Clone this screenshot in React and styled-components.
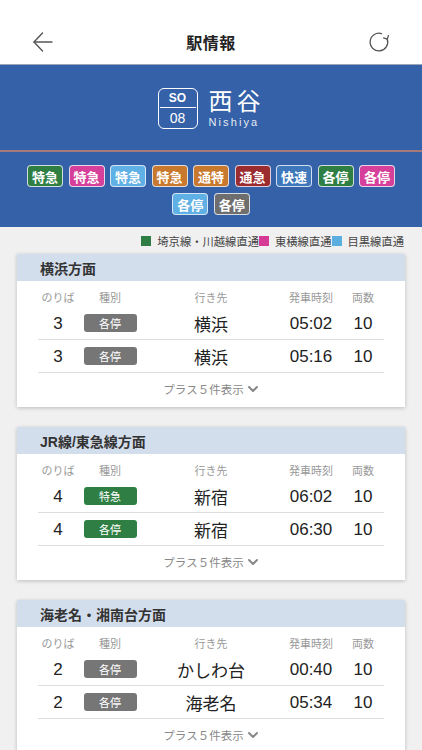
import React from "react";
import styled, { createGlobalStyle } from "styled-components";

const FONT = `"Liberation Sans", "Noto Sans CJK JP", sans-serif`;

const GlobalStyle = createGlobalStyle`
  html, body {
    margin: 0;
    padding: 0;
    background: #f0f0f0;
    font-family: ${FONT};
    -webkit-font-smoothing: antialiased;
  }
  body {
    width: 422px;
    height: 750px;
    overflow: hidden;
  }
`;

const TRAIN_TYPES = [
  { label: "特急", color: "#2f7f45" },
  { label: "特急", color: "#d6409a" },
  { label: "特急", color: "#5fb0e4" },
  { label: "特急", color: "#c8792d" },
  { label: "通特", color: "#c8792d" },
  { label: "通急", color: "#9a2b2e" },
  { label: "快速", color: "#3e78bb" },
  { label: "各停", color: "#2f7f45" },
  { label: "各停", color: "#d6409a" },
  { label: "各停", color: "#5fb0e4" },
  { label: "各停", color: "#6e6e6e" }
];

const LEGEND = [
  { label: "埼京線・川越線直通", color: "#2e7d44" },
  { label: "東横線直通", color: "#d63a96" },
  { label: "目黒線直通", color: "#5aaee0" }
];

const DIRECTIONS = [
  {
    title: "横浜方面",
    rows: [
      { track: "3", type: "各停", color: "#767676", dest: "横浜", time: "05:02", cars: "10" },
      { track: "3", type: "各停", color: "#767676", dest: "横浜", time: "05:16", cars: "10" }
    ]
  },
  {
    title: "JR線/東急線方面",
    rows: [
      { track: "4", type: "特急", color: "#2f7f45", dest: "新宿", time: "06:02", cars: "10" },
      { track: "4", type: "各停", color: "#2f7f45", dest: "新宿", time: "06:30", cars: "10" }
    ]
  },
  {
    title: "海老名・湘南台方面",
    rows: [
      { track: "2", type: "各停", color: "#767676", dest: "かしわ台", time: "00:40", cars: "10" },
      { track: "2", type: "各停", color: "#767676", dest: "海老名", time: "05:34", cars: "10" }
    ]
  }
];

const Page = styled.div`
  width: 422px;
  min-height: 750px;
  background: #f0f0f0;
`;

const NavBar = styled.header`
  height: 65px;
  background: #fff;
  border-bottom: 1px solid #9aa6b8;
  display: flex;
  align-items: center;
  justify-content: space-between;
  padding: 0 25px 0 25px;
  box-sizing: border-box;
`;

const NavButton = styled.button`
  width: 36px;
  height: 36px;
  border: 0;
  background: none;
  padding: 0;
  display: flex;
  align-items: center;
  justify-content: center;
  color: #555;
  margin-top: 20px;
`;

const NavTitle = styled.h1`
  margin: 20px 0 0;
  font-size: 16px;
  font-weight: 700;
  color: #222;
  letter-spacing: 0.5px;
`;

const StationPanel = styled.section`
  background: #3461a7;
`;

const StationHead = styled.div`
  height: 85px;
  display: flex;
  align-items: center;
  justify-content: center;
  gap: 11px;
  border-bottom: 2px solid #a5787a;
`;

const NumberBadge = styled.div`
  width: 40px;
  height: 41px;
  box-sizing: border-box;
  border: 1.5px solid #fff;
  border-radius: 6px;
  display: flex;
  flex-direction: column;
  align-items: center;
  justify-content: center;
  color: #fff;
  margin-top: 2px;
`;

const LineCode = styled.span`
  font-size: 12px;
  font-weight: 700;
  line-height: 14px;
  padding: 0 4px 2px;
  border-bottom: 1px solid #fff;
  width: 28px;
  text-align: center;
`;

const StationNo = styled.span`
  font-size: 14px;
  line-height: 16px;
  padding-top: 2px;
  font-weight: 500;
`;

const NameBlock = styled.div`
  display: flex;
  flex-direction: column;
  color: #fff;
`;

const StationName = styled.span`
  font-size: 24px;
  line-height: 28px;
  letter-spacing: 4px;
  font-family: "Noto Sans CJK JP", sans-serif;
  font-weight: 400;
`;

const StationRoman = styled.span`
  font-size: 11px;
  line-height: 14px;
  letter-spacing: 2.1px;
  margin-top: 1px;
  color: #e6ecf5;
`;

const TagArea = styled.div`
  padding: 13px 24px 12px;
  display: flex;
  flex-wrap: wrap;
  justify-content: center;
  gap: 6px 5.5px;
`;

const TypeTag = styled.span`
  width: 36px;
  height: 22px;
  box-sizing: border-box;
  border: 1.5px solid rgba(235, 240, 248, 0.85);
  border-radius: 4px;
  background: ${(p) => p.$color};
  color: #fff;
  font-size: 13px;
  font-weight: 700;
  display: flex;
  align-items: center;
  justify-content: center;
`;

const Legend = styled.div`
  display: flex;
  justify-content: flex-end;
  align-items: center;
  padding: 6px 18px 0 0;
  height: 21px;
  box-sizing: border-box;
  margin-bottom: 6px;
`;

const LegendItem = styled.span`
  display: flex;
  align-items: center;
  font-size: 11.3px;
  color: #444;
  white-space: nowrap;

  &::before {
    content: "";
    width: 10px;
    height: 10px;
    background: ${(p) => p.$color};
    margin-right: 6px;
  }
`;

const Cards = styled.div`
  display: flex;
  flex-direction: column;
  gap: 20px;
  padding: 0 17px;
`;

const Card = styled.section`
  background: #fff;
  box-shadow: 0 1px 4px rgba(0, 0, 0, 0.22);
`;

const CardHeader = styled.h2`
  margin: 0;
  height: 27px;
  background: #d3deec;
  padding-left: 23px;
  display: flex;
  align-items: center;
  font-size: 14px;
  font-weight: 700;
  color: #333;
`;

const Table = styled.div`
  padding: 6px 21px 0;
`;

const Row = styled.div`
  display: grid;
  grid-template-columns: 40px 64px 138px 62px 42px;
  align-items: center;
  justify-items: center;
  height: ${(p) => (p.$head ? "20px" : "32px")};
  border-bottom: ${(p) => (p.$head ? "0" : "1px solid #ddd")};
`;

const HeadCell = styled.span`
  font-size: 11px;
  color: #999;
`;

const Cell = styled.span`
  font-size: 17px;
  color: #222;
  padding-top: 1px;
`;

const TypeBadge = styled.span`
  width: 53px;
  height: 18px;
  border-radius: 3px;
  background: ${(p) => p.$color};
  color: #fff;
  font-size: 11px;
  display: flex;
  align-items: center;
  justify-content: center;
`;

const MoreButton = styled.button`
  width: 100%;
  height: 34px;
  border: 0;
  background: none;
  display: flex;
  align-items: center;
  justify-content: center;
  gap: 3px;
  font-family: ${FONT};
  font-size: 11.5px;
  color: #888;
  padding: 0 0 2px;
`;

function BackIcon() {
  return (
    <svg width="22" height="22" viewBox="0 0 22 22" fill="none" stroke="#555" strokeWidth="1.4" strokeLinecap="round" strokeLinejoin="round">
      <path d="M20 11H2" />
      <path d="M10.5 2L2 11l8.5 9" />
    </svg>
  );
}

function RefreshIcon() {
  return (
    <svg width="22" height="22" viewBox="0 0 22 22" fill="none" stroke="#555" strokeWidth="1.3" strokeLinecap="round" strokeLinejoin="round">
      <path d="M13.5 2.6A8.8 8.8 0 1 0 19.2 8" />
      <path d="M20.4 4.6l-1.2 3.6-3.6-1.3" />
    </svg>
  );
}

function Chevron() {
  return (
    <svg width="12" height="12" viewBox="0 0 12 12" fill="none" stroke="#888" strokeWidth="2" strokeLinecap="round" strokeLinejoin="round">
      <path d="M2 4l4 4 4-4" />
    </svg>
  );
}

function DirectionCard({ title, rows }) {
  return (
    <Card>
      <CardHeader>{title}</CardHeader>
      <Table>
        <Row $head>
          <HeadCell>のりば</HeadCell>
          <HeadCell>種別</HeadCell>
          <HeadCell>行き先</HeadCell>
          <HeadCell>発車時刻</HeadCell>
          <HeadCell>両数</HeadCell>
        </Row>
        {rows.map((r, i) => (
          <Row key={i}>
            <Cell>{r.track}</Cell>
            <TypeBadge $color={r.color}>{r.type}</TypeBadge>
            <Cell>{r.dest}</Cell>
            <Cell>{r.time}</Cell>
            <Cell>{r.cars}</Cell>
          </Row>
        ))}
      </Table>
      <MoreButton>
        プラス５件表示
        <Chevron />
      </MoreButton>
    </Card>
  );
}

export default function App() {
  return (
    <Page>
      <GlobalStyle />
      <NavBar>
        <NavButton aria-label="戻る">
          <BackIcon />
        </NavButton>
        <NavTitle>駅情報</NavTitle>
        <NavButton aria-label="更新">
          <RefreshIcon />
        </NavButton>
      </NavBar>
      <StationPanel>
        <StationHead>
          <NumberBadge>
            <LineCode>SO</LineCode>
            <StationNo>08</StationNo>
          </NumberBadge>
          <NameBlock>
            <StationName>西谷</StationName>
            <StationRoman>Nishiya</StationRoman>
          </NameBlock>
        </StationHead>
        <TagArea>
          {TRAIN_TYPES.map((t, i) => (
            <TypeTag key={i} $color={t.color}>
              {t.label}
            </TypeTag>
          ))}
        </TagArea>
      </StationPanel>
      <Legend>
        {LEGEND.map((l) => (
          <LegendItem key={l.label} $color={l.color}>
            {l.label}
          </LegendItem>
        ))}
      </Legend>
      <Cards>
        {DIRECTIONS.map((d) => (
          <DirectionCard key={d.title} title={d.title} rows={d.rows} />
        ))}
      </Cards>
    </Page>
  );
}
